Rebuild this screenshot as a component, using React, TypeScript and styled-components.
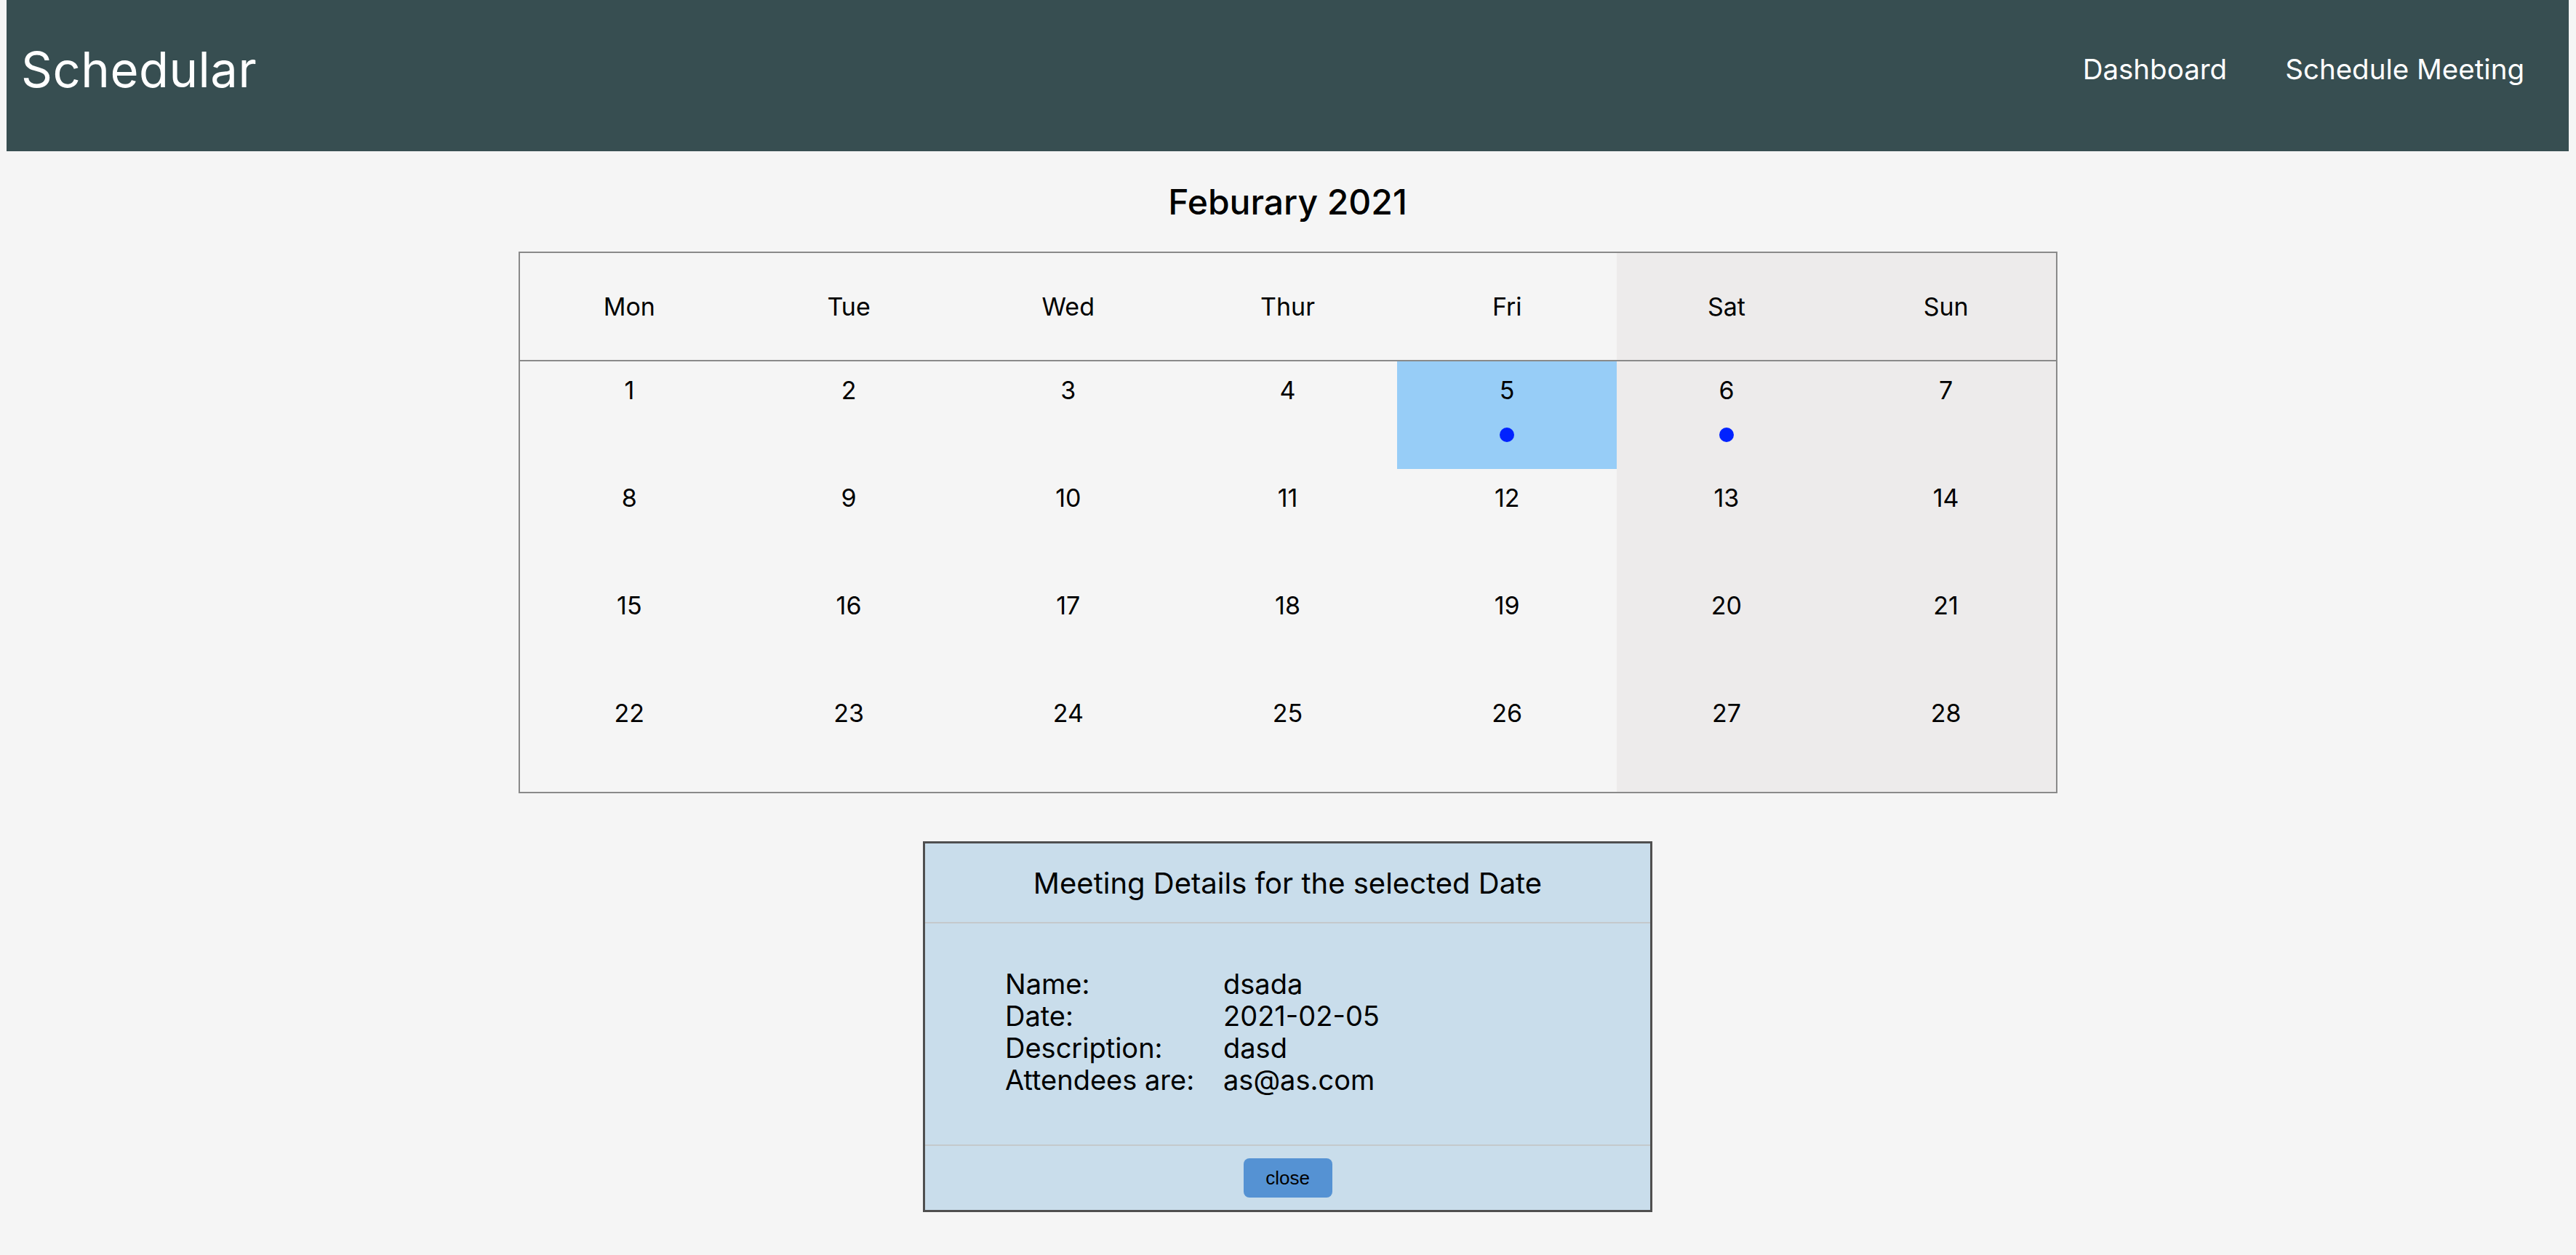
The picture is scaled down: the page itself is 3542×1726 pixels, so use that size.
import { Fragment } from "react";
import styled, { createGlobalStyle } from "styled-components";

const GlobalStyle = createGlobalStyle`
  html, body {
    margin: 0;
    padding: 0;
    background: #f5f5f5;
  }
  body {
    padding: 0 10px 0 9px;
    font-family: Inter, "Noto Sans", sans-serif;
    color: #000;
  }
`;

const NavBar = styled.header`
  height: 208px;
  background: #374e51;
  display: flex;
  align-items: center;
  justify-content: space-between;
  padding: 0 61px 18px 20px;
  box-sizing: border-box;
  color: #fff;
`;

const Brand = styled.h1`
  margin: 0;
  font-size: 67px;
  font-weight: 400;
  letter-spacing: 0.5px;
`;

const NavLinks = styled.nav`
  display: flex;
  gap: 80px;
`;

const NavLink = styled.a`
  color: #fff;
  text-decoration: none;
  font-size: 38.5px;
`;

const MonthTitle = styled.h2`
  margin: 0;
  height: 138px;
  display: flex;
  align-items: center;
  justify-content: center;
  font-size: 48px;
  font-weight: 500;
`;

const Calendar = styled.div`
  width: 2116px;
  margin: 0 auto;
  border: 2px solid #8a8a8a;
  box-sizing: border-box;
  display: grid;
  grid-template-columns: repeat(7, 1fr);
`;

const DayHead = styled.div<{ $weekend?: boolean }>`
  height: 149px;
  display: flex;
  align-items: center;
  justify-content: center;
  font-size: 34px;
  background: ${(p) => (p.$weekend ? "#edebeb" : "transparent")};
  border-bottom: 2px solid #8a8a8a;
  box-sizing: border-box;
`;

const DateCell = styled.div<{ $weekend?: boolean; $selected?: boolean }>`
  height: 148px;
  display: flex;
  flex-direction: column;
  align-items: center;
  padding-top: 21px;
  box-sizing: border-box;
  font-size: 34px;
  line-height: 38px;
  background: ${(p) =>
    p.$selected ? "#97cdf7" : p.$weekend ? "#edebeb" : "transparent"};
`;

const Dot = styled.span`
  width: 20px;
  height: 20px;
  border-radius: 50%;
  background: #0022ff;
  margin-top: 32px;
`;

const Modal = styled.section`
  width: 1003px;
  margin: 66px auto 0;
  background: #c9ddeb;
  border: 3px solid #4f4f4f;
  box-sizing: border-box;
`;

const ModalHead = styled.div`
  height: 108px;
  display: flex;
  align-items: center;
  justify-content: center;
  font-size: 40px;
  border-bottom: 2px solid #c4c9cc;
`;

const ModalBody = styled.div`
  padding: 61px 113px 67px 110px;
  display: grid;
  grid-template-columns: 300px 1fr;
  font-size: 38px;
  line-height: 44px;
  border-bottom: 2px solid #c4c9cc;
`;

const ModalFoot = styled.div`
  height: 88px;
  display: flex;
  align-items: center;
  justify-content: center;
`;

const CloseButton = styled.button`
  width: 122px;
  height: 54px;
  border: none;
  border-radius: 8px;
  background: #5592d3;
  color: #000;
  font-family: "Liberation Sans", Arial, sans-serif;
  font-size: 26px;
`;

const days = ["Mon", "Tue", "Wed", "Thur", "Fri", "Sat", "Sun"];
const meetings = [5, 6];
const selected = 5;

const details: [string, string][] = [
  ["Name:", "dsada"],
  ["Date:", "2021-02-05"],
  ["Description:", "dasd"],
  ["Attendees are:", "as@as.com"],
];

export default function App() {
  const dates = Array.from({ length: 28 }, (_, i) => i + 1);
  return (
    <>
      <GlobalStyle />
      <NavBar>
        <Brand>Schedular</Brand>
        <NavLinks>
          <NavLink href="#">Dashboard</NavLink>
          <NavLink href="#">Schedule Meeting</NavLink>
        </NavLinks>
      </NavBar>
      <MonthTitle>Feburary 2021</MonthTitle>
      <Calendar>
        {days.map((d, i) => (
          <DayHead key={d} $weekend={i >= 5}>
            {d}
          </DayHead>
        ))}
        {dates.map((n, i) => (
          <DateCell key={n} $weekend={i % 7 >= 5} $selected={n === selected}>
            {n}
            {meetings.includes(n) && <Dot />}
          </DateCell>
        ))}
      </Calendar>
      <Modal>
        <ModalHead>Meeting Details for the selected Date</ModalHead>
        <ModalBody>
          {details.map(([k, v]) => (
            <Fragment key={k}>
              <span>{k}</span>
              <span>{v}</span>
            </Fragment>
          ))}
        </ModalBody>
        <ModalFoot>
          <CloseButton>close</CloseButton>
        </ModalFoot>
      </Modal>
    </>
  );
}
